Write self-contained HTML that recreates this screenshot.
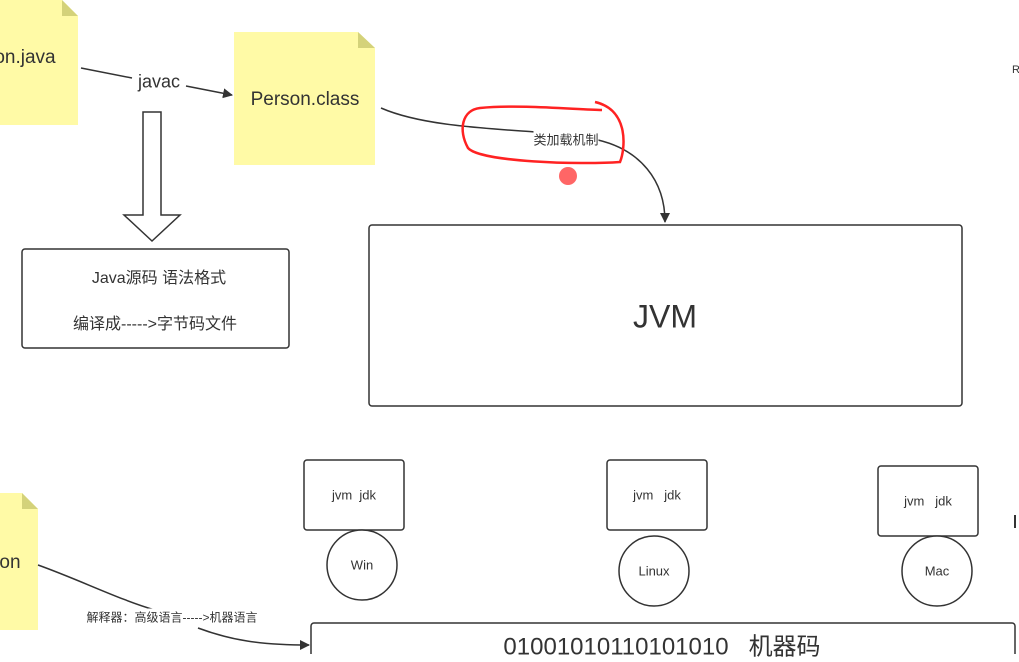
<!DOCTYPE html>
<html><head><meta charset="utf-8"><style>
body{margin:0;width:1019px;height:654px;overflow:hidden;background:#fff;position:relative;font-family:"Liberation Sans","Noto Sans CJK SC",sans-serif;color:#333}
.t{position:absolute;white-space:nowrap;transform:translate(-50%,-50%)}
</style></head><body>
<svg width="1019" height="654" style="position:absolute;left:0;top:0">
<defs><marker id="a" markerWidth="10" markerHeight="10" refX="9" refY="5" orient="auto" markerUnits="userSpaceOnUse"><path d="M0,0 L10,5 L0,10 Z" fill="#333"/></marker></defs>
<path d="M0,0 H62 L78,16 V125 H0 Z" fill="#fffaa6"/><path d="M62,0 L78,16 H62 Z" fill="#d4d27a"/>
<path d="M234,32 H358 L375,48 V165 H234 Z" fill="#fffaa6"/><path d="M358,32 L375,48 H358 Z" fill="#d4d27a"/>
<path d="M0,493 H22 L38,509 V630 H0 Z" fill="#fffaa6"/><path d="M22,493 L38,509 H22 Z" fill="#d4d27a"/>
<path d="M81,68 L132,78" stroke="#333" stroke-width="1.5" fill="none"/>
<path d="M186,86 L232,95" stroke="#333" stroke-width="1.5" fill="none" marker-end="url(#a)"/>
<path d="M143,112 H161 V215 H180 L152,241 L124,215 H143 Z" fill="#fff" stroke="#333" stroke-width="1.5"/>
<rect x="22" y="249" width="267" height="99" rx="3" fill="#fff" stroke="#333" stroke-width="1.5"/>
<rect x="369" y="225" width="593" height="181" rx="3" fill="#fff" stroke="#333" stroke-width="1.5"/>
<path d="M381,108 C420,125 480,128 535,132 M598,140 C640,150 665,180 665,222" stroke="#333" stroke-width="1.5" fill="none" marker-end="url(#a)"/>
<path d="M595,102 C630,110 625,150 620,162 C580,165 480,162 468,148 C458,130 462,110 480,108 C520,104 580,110 602,110" stroke="#f22" stroke-width="2.5" fill="none"/>
<circle cx="568" cy="176" r="9" fill="#f66"/>
<rect x="304" y="460" width="100" height="70" rx="3" fill="#fff" stroke="#333" stroke-width="1.5"/>
<rect x="607" y="460" width="100" height="70" rx="3" fill="#fff" stroke="#333" stroke-width="1.5"/>
<rect x="878" y="466" width="100" height="70" rx="3" fill="#fff" stroke="#333" stroke-width="1.5"/>
<ellipse cx="362" cy="565" rx="35" ry="35" fill="#fff" stroke="#333" stroke-width="1.5"/>
<ellipse cx="654" cy="571" rx="35" ry="35" fill="#fff" stroke="#333" stroke-width="1.5"/>
<ellipse cx="937" cy="571" rx="35" ry="35" fill="#fff" stroke="#333" stroke-width="1.5"/>
<path d="M38,565 C80,580 120,600 155,610" stroke="#333" stroke-width="1.5" fill="none"/>
<path d="M198,628 C230,640 260,645 309,645" stroke="#333" stroke-width="1.5" fill="none" marker-end="url(#a)"/>
<rect x="311" y="623" width="704" height="60" rx="3" fill="#fff" stroke="#333" stroke-width="1.5"/>
<path d="M1015,515 V528" stroke="#333" stroke-width="2"/>
</svg>
<div class="t" style="left:25px;top:58px;font-size:19px">on.java</div>
<div class="t" style="left:159px;top:82px;font-size:18px;background:#fff">javac</div>
<div class="t" style="left:305px;top:100px;font-size:19px">Person.class</div>
<div class="t" style="left:566px;top:139px;font-size:13px;background:#fff">类加载机制</div>
<div class="t" style="left:159px;top:276px;font-size:16px">Java源码 语法格式</div>
<div class="t" style="left:155px;top:322px;font-size:16px">编译成-----&gt;字节码文件</div>
<div class="t" style="left:665px;top:317px;font-size:32px">JVM</div>
<div class="t" style="left:354px;top:495px;font-size:13px">jvm&nbsp; jdk</div>
<div class="t" style="left:657px;top:495px;font-size:13px">jvm&nbsp;&nbsp; jdk</div>
<div class="t" style="left:928px;top:501px;font-size:13px">jvm&nbsp;&nbsp; jdk</div>
<div class="t" style="left:362px;top:565px;font-size:13px">Win</div>
<div class="t" style="left:654px;top:571px;font-size:13px">Linux</div>
<div class="t" style="left:937px;top:571px;font-size:13px">Mac</div>
<div class="t" style="left:10px;top:563px;font-size:19px">on</div>
<div class="t" style="left:172px;top:617px;font-size:12px;background:#fff">解释器：高级语言-----&gt;机器语言</div>
<div class="t" style="left:662px;top:644px;font-size:24px">01001010110101010&nbsp;&nbsp; 机器码</div>
<div class="t" style="left:1016px;top:70px;font-size:11px">R</div>
</body></html>
